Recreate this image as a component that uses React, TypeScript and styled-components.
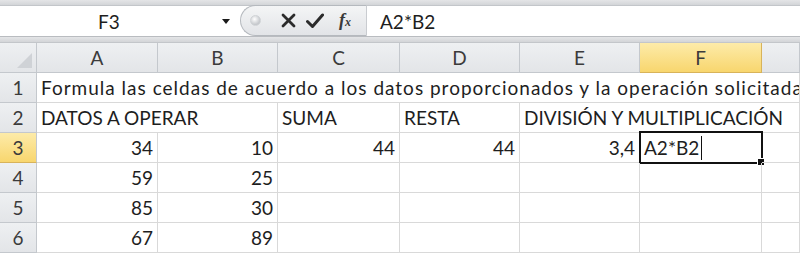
import React from 'react'
import styled, { createGlobalStyle, css } from 'styled-components'

const GlobalStyle = createGlobalStyle`
  html, body {
    margin: 0;
    padding: 0;
    background: #ffffff;
  }
  body {
    font-family: Lato, "Open Sans", sans-serif;
  }
`

const Window = styled.div`
  width: 800px;
  height: 253px;
  overflow: hidden;
  display: flex;
  flex-direction: column;
  background: #ffffff;
  color: #1e1e1e;
`

const Strip = styled.div<{ $h: number }>`
  height: ${({ $h }) => $h}px;
  flex: none;
  background: linear-gradient(#e4e5e7, #d3d5d8);
  border-bottom: 1px solid #c3c6ca;
`

const FormulaBar = styled.div`
  display: flex;
  height: 30px;
  flex: none;
  background: #ffffff;
  border-bottom: 1px solid #b9bcc0;
`

const NameBox = styled.div`
  width: 240px;
  display: flex;
  align-items: center;
  font-size: 19px;
`

const NameText = styled.span`
  flex: 1;
  text-align: center;
  padding-right: 4px;
`

const DropArrow = styled.span`
  width: 0;
  height: 0;
  margin-right: 10px;
  border-left: 4px solid transparent;
  border-right: 4px solid transparent;
  border-top: 5px solid #1a1a1a;
`

const Pill = styled.div`
  width: 127px;
  display: flex;
  align-items: center;
  background: linear-gradient(#f4f5f6, #e2e4e7);
  border: 1px solid #b5b9be;
  border-right-color: #c9ccd0;
  border-radius: 16px 0 0 16px;
  box-sizing: border-box;
  margin-top: -1px;
  height: 31px;
`

const Grip = styled.span`
  width: 9px;
  height: 9px;
  border-radius: 50%;
  margin-left: 9px;
  background: radial-gradient(circle at 40% 35%, #ffffff, #c4c7cb 70%);
  border: 1px solid #d0d3d6;
`

const IconSlot = styled.span<{ $ml: number }>`
  margin-left: ${({ $ml }) => $ml}px;
  display: flex;
  align-items: center;
`

const Fx = styled.span`
  font-family: "Liberation Serif", "DejaVu Serif", serif;
  font-style: italic;
  font-weight: bold;
  font-size: 18px;
  color: #3a3a3a;
  & small {
    font-size: 12px;
  }
`

const FormulaInput = styled.div`
  flex: 1;
  display: flex;
  align-items: center;
  padding-left: 13px;
  font-size: 19px;
`

const Sheet = styled.div`
  display: grid;
  grid-template-columns: 37px 121px 120px 122px 120px 120px 122px 1fr;
  grid-auto-rows: 30px;
  font-size: 19px;
`

const headerBase = css<{ $active?: boolean }>`
  display: flex;
  align-items: center;
  justify-content: center;
  color: #3b3b3b;
  background: ${({ $active }) =>
    $active ? 'linear-gradient(#fdeba9, #f8d66e)' : 'linear-gradient(#eef0f2, #e3e5e8)'};
  border-right: 1px solid ${({ $active }) => ($active ? '#d8b35a' : '#c4c8cd')};
  border-bottom: 1px solid ${({ $active }) => ($active ? '#d8b35a' : '#c4c8cd')};
  box-sizing: border-box;
`

const ColHead = styled.div<{ $active?: boolean }>`
  ${headerBase}
`

const RowHead = styled.div<{ $active?: boolean }>`
  ${headerBase}
  border-right-color: #c4c8cd;
`

const Corner = styled.div`
  position: relative;
  background: linear-gradient(#eef0f2, #e3e5e8);
  border-right: 1px solid #c4c8cd;
  border-bottom: 1px solid #c4c8cd;
  box-sizing: border-box;
  &::after {
    content: '';
    position: absolute;
    right: 4px;
    bottom: 4px;
    border-left: 15px solid transparent;
    border-bottom: 15px solid #cfd2d6;
  }
`

const Cell = styled.div<{ $span?: number; $right?: boolean; $selected?: boolean; $tracking?: number }>`
  position: relative;
  grid-column: span ${({ $span }) => $span ?? 1};
  display: flex;
  align-items: center;
  justify-content: ${({ $right }) => ($right ? 'flex-end' : 'flex-start')};
  padding: 0 4px;
  white-space: nowrap;
  letter-spacing: ${({ $tracking }) => $tracking ?? 0}px;
  overflow: ${({ $selected }) => ($selected ? 'visible' : 'hidden')};
  border-right: 1px solid #d9d9d9;
  border-bottom: 1px solid #d9d9d9;
  box-sizing: border-box;
  ${({ $selected }) =>
    $selected &&
    css`
      &::before {
        content: '';
        position: absolute;
        left: -1px;
        top: -2px;
        right: -2px;
        bottom: -2px;
        border: 2px solid #111111;
        pointer-events: none;
      }
      &::after {
        content: '';
        position: absolute;
        right: -4px;
        bottom: -4px;
        width: 6px;
        height: 6px;
        background: #111111;
        border: 1px solid #ffffff;
      }
    `}
`

const Caret = styled.span`
  display: inline-block;
  width: 1px;
  height: 24px;
  background: #111111;
  margin-left: 2px;
`

type CellData = { text?: string; span?: number; right?: boolean; edit?: boolean; tracking?: number }

const columns = ['A', 'B', 'C', 'D', 'E', 'F', '']

const rows: CellData[][] = [
  [
    {
      text: 'Formula las celdas de acuerdo a los datos proporcionados y la operación solicitada',
      span: 7,
      tracking: 1,
    },
  ],
  [
    { text: 'DATOS A OPERAR', span: 2 },
    { text: 'SUMA' },
    { text: 'RESTA' },
    { text: 'DIVISIÓN Y MULTIPLICACIÓN', span: 3 },
  ],
  [
    { text: '34', right: true },
    { text: '10', right: true },
    { text: '44', right: true },
    { text: '44', right: true },
    { text: '3,4', right: true },
    { text: 'A2*B2', edit: true },
    {},
  ],
  [{ text: '59', right: true }, { text: '25', right: true }, {}, {}, {}, {}, {}],
  [{ text: '85', right: true }, { text: '30', right: true }, {}, {}, {}, {}, {}],
  [{ text: '67', right: true }, { text: '89', right: true }, {}, {}, {}, {}, {}],
]

const CrossIcon = () => (
  <svg width="15" height="15" viewBox="0 0 15 15">
    <path d="M2 2 L13 13 M13 2 L2 13" stroke="#2b2b2b" strokeWidth="2.8" strokeLinecap="round" />
  </svg>
)

const CheckIcon = () => (
  <svg width="18" height="16" viewBox="0 0 18 16">
    <path d="M1.5 8.5 L6.5 13.5 L16.5 2" stroke="#2b2b2b" strokeWidth="3" fill="none" strokeLinecap="round" strokeLinejoin="round" />
  </svg>
)

const App: React.FC = () => {
  return (
    <>
      <GlobalStyle />
      <Window>
        <Strip $h={5} />
        <FormulaBar>
          <NameBox>
            <NameText>F3</NameText>
            <DropArrow />
          </NameBox>
          <Pill>
            <Grip />
            <IconSlot $ml={20}>
              <CrossIcon />
            </IconSlot>
            <IconSlot $ml={10}>
              <CheckIcon />
            </IconSlot>
            <IconSlot $ml={15}>
              <Fx>
                f<small>x</small>
              </Fx>
            </IconSlot>
          </Pill>
          <FormulaInput>A2*B2</FormulaInput>
        </FormulaBar>
        <Strip $h={5} />
        <Sheet>
          <Corner />
          {columns.map((c, i) => (
            <ColHead key={i} $active={c === 'F'}>
              {c}
            </ColHead>
          ))}
          {rows.map((row, r) => (
            <React.Fragment key={r}>
              <RowHead $active={r === 2}>{r + 1}</RowHead>
              {row.map((cell, c) => (
                <Cell
                  key={c}
                  $span={cell.span}
                  $right={cell.right}
                  $selected={cell.edit}
                  $tracking={cell.tracking}
                >
                  {cell.text}
                  {cell.edit && <Caret />}
                </Cell>
              ))}
            </React.Fragment>
          ))}
        </Sheet>
      </Window>
    </>
  )
}

export default App
